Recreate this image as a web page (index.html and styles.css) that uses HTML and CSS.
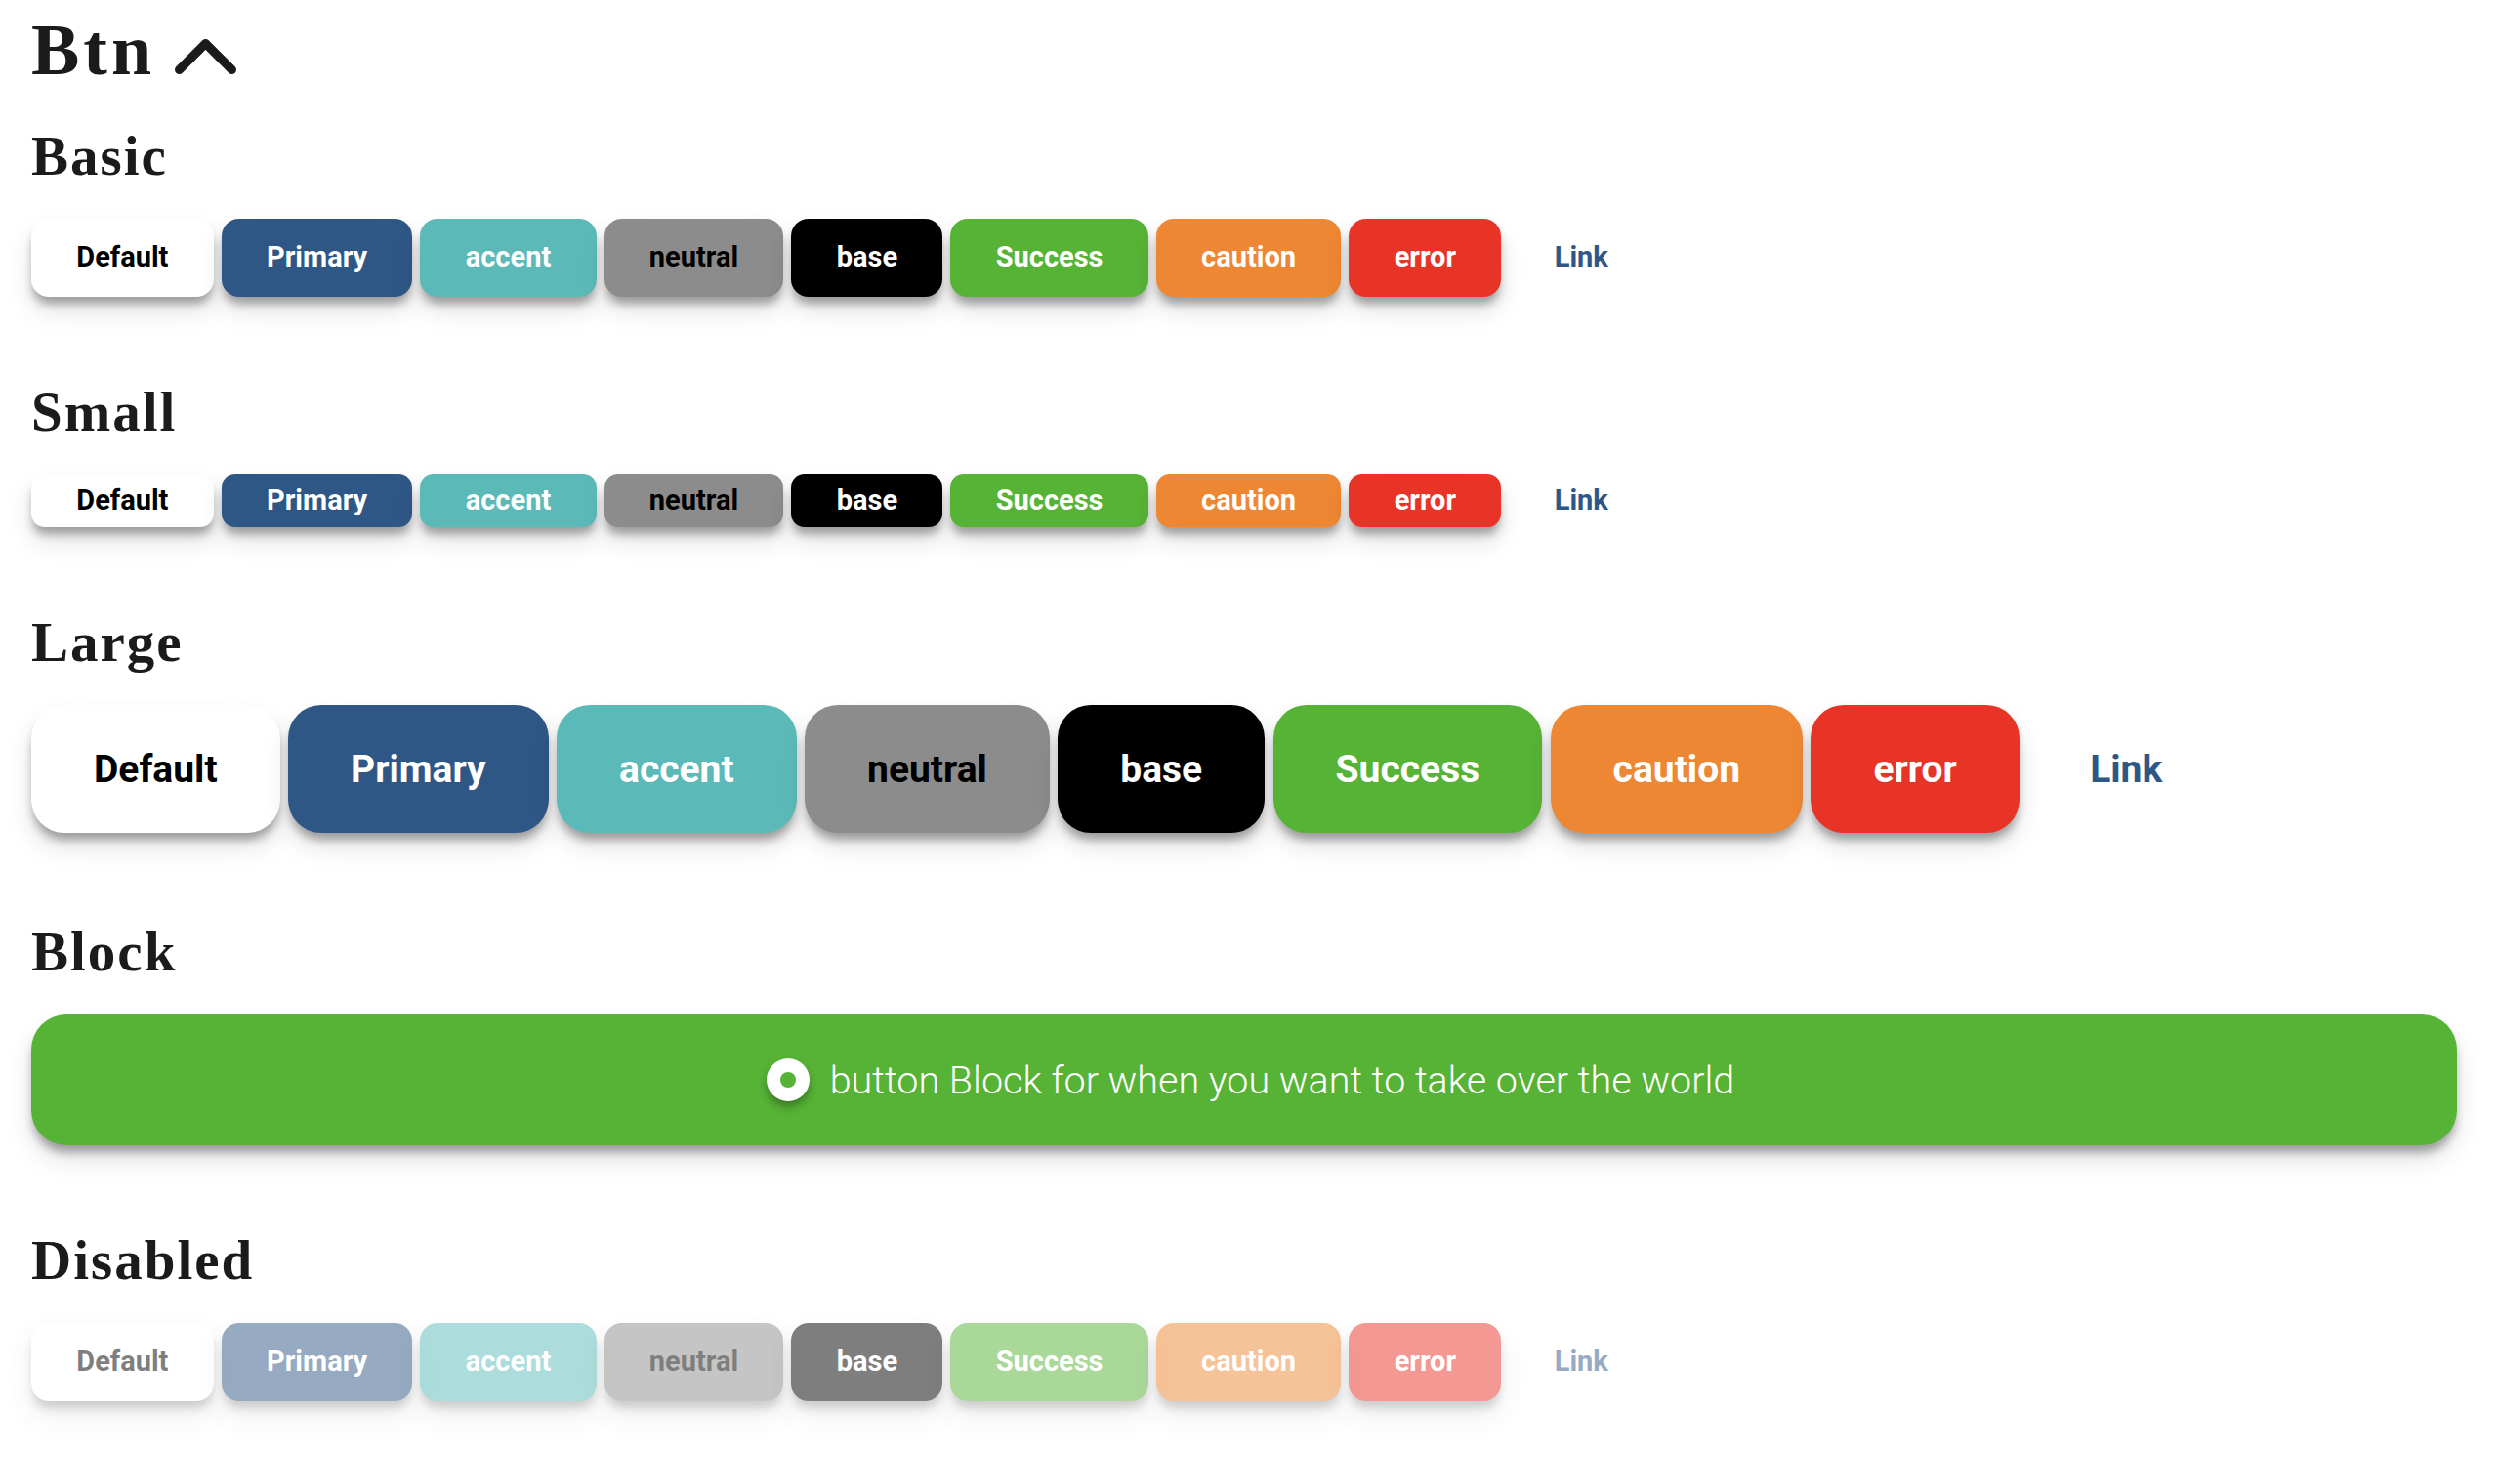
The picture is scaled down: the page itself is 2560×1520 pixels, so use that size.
FILE: index.html
```html
<!DOCTYPE html>
<html lang="en">
<head>
<meta charset="utf-8">
<title>Btn</title>
<link rel="stylesheet" href="styles.css">
</head>
<body>
<main class="page">
  <h1 class="title"><span class="title-text">Btn</span><svg class="chevron" width="63" height="38" viewBox="0 0 63 38" aria-hidden="true"><polyline points="4.5,33.5 31.5,6.5 58.5,33.5" fill="none" stroke="#1b1b1b" stroke-width="9" stroke-linecap="round" stroke-linejoin="round"/></svg></h1>

  <section class="group">
    <h2 class="group-title">Basic</h2>
    <div class="row">
      <button class="btn btn-default">Default</button>
      <button class="btn btn-primary">Primary</button>
      <button class="btn btn-accent">accent</button>
      <button class="btn btn-neutral">neutral</button>
      <button class="btn btn-base">base</button>
      <button class="btn btn-success">Success</button>
      <button class="btn btn-caution">caution</button>
      <button class="btn btn-error">error</button>
      <button class="btn btn-link">Link</button>
    </div>
  </section>

  <section class="group">
    <h2 class="group-title">Small</h2>
    <div class="row">
      <button class="btn btn-sm btn-default">Default</button>
      <button class="btn btn-sm btn-primary">Primary</button>
      <button class="btn btn-sm btn-accent">accent</button>
      <button class="btn btn-sm btn-neutral">neutral</button>
      <button class="btn btn-sm btn-base">base</button>
      <button class="btn btn-sm btn-success">Success</button>
      <button class="btn btn-sm btn-caution">caution</button>
      <button class="btn btn-sm btn-error">error</button>
      <button class="btn btn-sm btn-link">Link</button>
    </div>
  </section>

  <section class="group">
    <h2 class="group-title">Large</h2>
    <div class="row row-lg">
      <button class="btn btn-lg btn-default">Default</button>
      <button class="btn btn-lg btn-primary">Primary</button>
      <button class="btn btn-lg btn-accent">accent</button>
      <button class="btn btn-lg btn-neutral">neutral</button>
      <button class="btn btn-lg btn-base">base</button>
      <button class="btn btn-lg btn-success">Success</button>
      <button class="btn btn-lg btn-caution">caution</button>
      <button class="btn btn-lg btn-error">error</button>
      <button class="btn btn-lg btn-link">Link</button>
    </div>
  </section>

  <section class="group group-block">
    <h2 class="group-title">Block</h2>
    <button class="btn btn-block btn-success"><span class="dot-icon"></span><span class="block-label">button Block for when you want to take over the world</span></button>
  </section>

  <section class="group">
    <h2 class="group-title">Disabled</h2>
    <div class="row">
      <button class="btn btn-default" disabled>Default</button>
      <button class="btn btn-primary" disabled>Primary</button>
      <button class="btn btn-accent" disabled>accent</button>
      <button class="btn btn-neutral" disabled>neutral</button>
      <button class="btn btn-base" disabled>base</button>
      <button class="btn btn-success" disabled>Success</button>
      <button class="btn btn-caution" disabled>caution</button>
      <button class="btn btn-error" disabled>error</button>
      <button class="btn btn-link" disabled>Link</button>
    </div>
  </section>
</main>
</body>
</html>
```

FILE: styles.css
```css
html, body {
  margin: 0;
  padding: 0;
  background: #ffffff;
}

.page {
  padding: 8px 44px 40px 32px;
  font-family: "Liberation Serif", "Times New Roman", serif;
  color: #1b1b1b;
}

.title {
  margin: 0;
  font-size: 74px;
  line-height: 86px;
  font-weight: 700;
}

.title-text {
  letter-spacing: 4px;
}

.chevron {
  margin-left: 20px;
  vertical-align: baseline;
}

.group {
  margin-top: 84px;
}

.group:first-of-type {
  margin-top: 32px;
}

.group-block {
  margin-top: 88px;
}

.group-title {
  margin: 0 0 30px;
  font-size: 57px;
  line-height: 68px;
  font-weight: 700;
  letter-spacing: 2px;
}

.row {
  display: flex;
  align-items: center;
  gap: 8px;
}

.row-lg {
  gap: 8.4px;
}

.btn {
  display: inline-flex;
  align-items: center;
  justify-content: center;
  box-sizing: border-box;
  height: 80px;
  padding: 0 46.3px 3px;
  margin: 0;
  border: none;
  border-radius: 18px;
  font-family: Roboto, "Liberation Sans", Arial, sans-serif;
  font-size: 29px;
  font-weight: 700;
  color: #ffffff;
  background: #ffffff;
  box-shadow: 0 9px 10px -2px rgba(0, 0, 0, 0.32), 0 14px 26px rgba(0, 0, 0, 0.12);
  cursor: pointer;
}

.btn-sm {
  height: 54px;
  border-radius: 14px;
}

.btn-lg {
  height: 131px;
  padding: 0 64px;
  border-radius: 34px;
  font-size: 39px;
}

.btn-default { background: #ffffff; color: #000000; }
.btn-primary { background: #2f5785; }
.btn-accent { background: #5bbab8; }
.btn-neutral { background: #8c8c8c; color: #000000; }
.btn-base { background: #000000; }
.btn-success { background: #56b336; }
.btn-caution { background: #ee8733; }
.btn-error { background: #e83427; }
.btn-link {
  background: transparent;
  color: #2f5785;
  box-shadow: none;
}

.btn:disabled {
  opacity: 0.5;
  cursor: default;
}

.btn-block {
  display: flex;
  width: 100%;
  height: 134px;
  padding: 0 0 0 13px;
  border-radius: 36px;
  gap: 21px;
}

.block-label {
  font-weight: 300;
  font-size: 39.5px;
}

.dot-icon {
  position: relative;
  width: 44px;
  height: 44px;
  border-radius: 50%;
  background: #ffffff;
  box-shadow: 0 6px 8px rgba(0, 0, 0, 0.3);
  flex: none;
}

.dot-icon::after {
  content: "";
  position: absolute;
  left: 14px;
  top: 14px;
  width: 16px;
  height: 16px;
  border-radius: 50%;
  background: #56b336;
}
```
